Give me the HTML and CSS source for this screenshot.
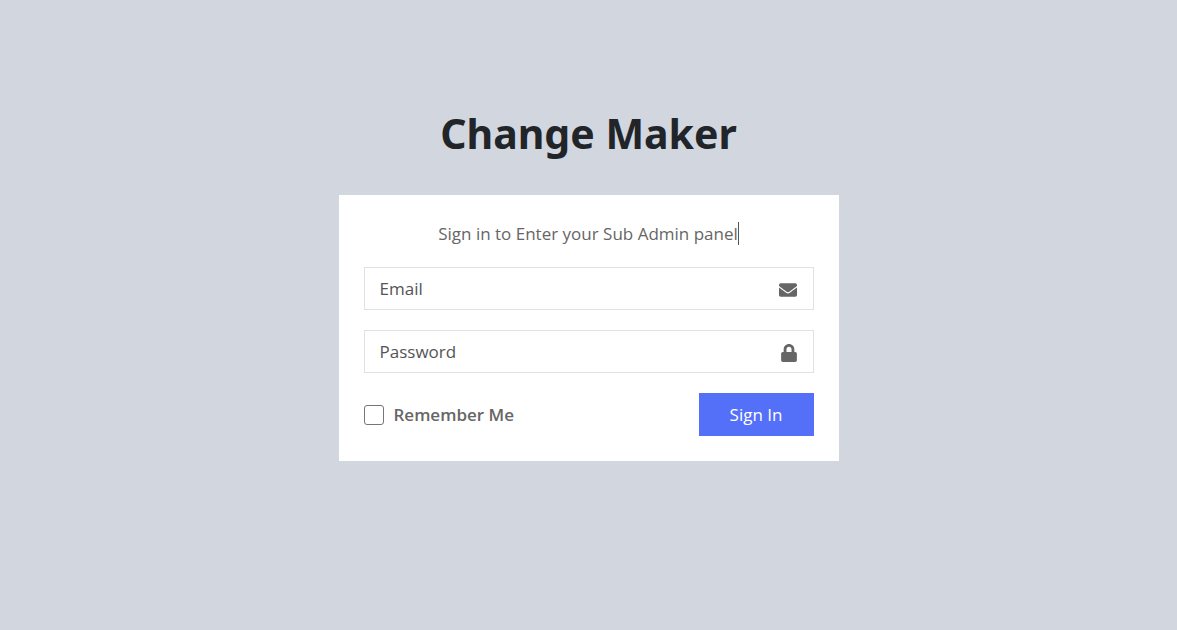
FILE: index.html
```html
<!DOCTYPE html>
<html lang="en">
<head>
<meta charset="utf-8">
<meta name="viewport" content="width=device-width, initial-scale=1">
<title>Change Maker</title>
<link rel="stylesheet" href="styles.css">
</head>
<body>
<main class="login">
  <h1 class="brand">Change Maker</h1>
  <section class="card">
    <p class="intro"><span class="caret-line">Sign in to Enter your Sub Admin panel</span></p>
    <form class="form">
      <div class="field">
        <input class="field-input" type="email" placeholder="Email" aria-label="Email">
        <svg class="field-icon" viewBox="0 0 512 512" aria-hidden="true"><path d="M502.3 190.8c3.9-3.1 9.7-.2 9.7 4.700V400c0 26.500-21.500 48-48 48H48c-26.500 0-48-21.500-48-48V195.600c0-5 5.700-7.800 9.700-4.700 22.400 17.400 52.100 39.500 154.100 113.600 21.100 15.400 56.700 47.800 92.200 47.600 35.700.3 72-32.800 92.300-47.600 102-74.100 131.600-96.300 154-113.700zM256 320c23.200.4 56.600-29.200 73.400-41.400 132.700-96.300 142.800-104.700 173.400-128.700 5.800-4.500 9.200-11.500 9.200-18.900v-19c0-26.500-21.500-48-48-48H48c-26.500 0-48 21.500-48 48v19c0 7.400 3.400 14.300 9.200 18.900 30.600 23.900 40.700 32.400 173.400 128.700 16.800 12.200 50.200 41.800 73.400 41.400z"/></svg>
      </div>
      <div class="field">
        <input class="field-input" type="password" placeholder="Password" aria-label="Password">
        <svg class="field-icon field-icon-lock" viewBox="0 0 448 512" aria-hidden="true"><path d="M400 224h-24v-72C376 68.200 307.800 0 224 0S72 68.200 72 152v72H48c-26.500 0-48 21.500-48 48v192c0 26.500 21.500 48 48 48h352c26.500 0 48-21.500 48-48V272c0-26.500-21.500-48-48-48zm-104 0H152v-72c0-39.700 32.300-72 72-72s72 32.300 72 72v72z"/></svg>
      </div>
      <div class="actions">
        <label class="remember"><input class="remember-box" type="checkbox">Remember Me</label>
        <button class="submit" type="submit">Sign In</button>
      </div>
    </form>
  </section>
</main>
</body>
</html>
```
FILE: styles.css
```css
* { box-sizing: border-box; }

body {
  margin: 0;
  min-height: 100vh;
  display: flex;
  align-items: center;
  justify-content: center;
  padding: 24px 0;
  background: #d2d6de;
  color: #666;
  font-family: "Segoe UI", "Open Sans", "Noto Sans", sans-serif;
  font-size: 17px;
  line-height: 24px;
}

.login {
  width: 500px;
  max-width: 100%;
  padding-bottom: 68px;
}

.brand {
  margin: 0 0 30px;
  color: #212529;
  font-family: "Segoe UI", "Noto Sans", sans-serif;
  font-size: 41px;
  line-height: 64px;
  font-weight: 700;
  text-align: center;
}

.card {
  padding: 25px;
  background: #fff;
}

.intro {
  margin: 0 0 20px;
  line-height: 27px;
  text-align: center;
}

.caret-line { border-right: 1px solid #555; }

.form {
  display: flex;
  flex-direction: column;
  gap: 20px;
}

.field {
  display: flex;
  align-items: center;
  height: 43px;
  padding: 0 16px 0 15px;
  border: 1px solid #dee2e6;
}

.field-input {
  flex: 1;
  min-width: 0;
  height: 41px;
  padding: 0;
  border: 0;
  outline: 0;
  background: transparent;
  color: #495057;
  font: inherit;
}

.field-input::placeholder {
  color: #555;
  opacity: 1;
}

.field-icon {
  width: 18px;
  height: 18px;
  margin-top: 2px;
  fill: #666;
}

.field-icon-lock { width: 16px; }

.actions {
  display: flex;
  align-items: center;
  justify-content: space-between;
}

.remember {
  display: flex;
  align-items: center;
  gap: 10px;
  font-weight: 600;
}

.remember-box {
  appearance: none;
  width: 20px;
  height: 20px;
  margin: 0;
  border: 1px solid #767676;
  border-radius: 3px;
  background: #fff;
}

.remember-box:checked { background: #5570f8; }

.submit {
  width: 115px;
  height: 43px;
  padding: 0;
  border: 0;
  background: #5570f8;
  color: #fff;
  font: inherit;
  cursor: pointer;
}
```
